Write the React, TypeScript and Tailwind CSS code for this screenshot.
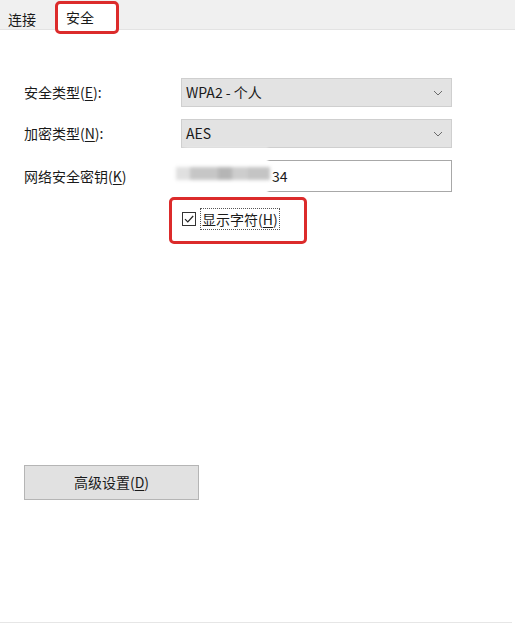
import React from "react";

const font = { fontFamily: '"Noto Sans CJK SC", "Noto Sans", sans-serif' };

function Chevron() {
  return (
    <svg width="10" height="6" viewBox="0 0 10 6" className="shrink-0">
      <path d="M1 1 L5 5 L9 1" fill="none" stroke="#6b6b6b" strokeWidth="1" />
    </svg>
  );
}

function Select({ value }: { value: string }) {
  return (
    <div className="flex h-[29px] w-[271px] items-center justify-between border border-[#cfcfcf] bg-[#e3e3e3] pl-[4px] pr-[8px] text-[14px] text-[#1a1a1a]">
      <span>{value}</span>
      <Chevron />
    </div>
  );
}

export default function App() {
  return (
    <div className="relative h-[624px] w-[515px] overflow-hidden bg-white text-[#1a1a1a]" style={font}>
      {/* Tab bar */}
      <div className="flex h-[30px] items-start border-b border-[#e3e3e3] bg-[#f0f0f0]">
        <div className="h-[29px] w-[57px] pl-[8px] pt-[9px] text-[14px] leading-[20px]">连接</div>
        <div className="relative mt-[2px] h-[28px] w-[60px] bg-white pl-[9px] pt-[5px] text-[14px] leading-[20px]">
          安全
        </div>
      </div>
      {/* tab annotation */}
      <div className="absolute left-[55px] top-[1px] h-[33px] w-[64px] rounded-[5px] border-[3px] border-[#dc2b2b]" />

      {/* Form */}
      <div className="pl-[24px] pt-[48px]">
        <div className="grid grid-cols-[157px_271px] items-center gap-y-[12px] text-[14px]">
          <div>
            安全类型(<span className="underline underline-offset-2">E</span>):
          </div>
          <Select value="WPA2 - 个人" />
          <div>
            加密类型(<span className="underline underline-offset-2">N</span>):
          </div>
          <Select value="AES" />
          <div>
            网络安全密钥(<span className="underline underline-offset-2">K</span>)
          </div>
          <div className="flex h-[32px] items-center border border-[#a8a8a8] bg-white pl-[90px] text-[14px]">
            34
          </div>
        </div>

        <div className="ml-[158px] mt-[16px] flex items-center">
          <div className="flex h-[14px] w-[14px] items-center justify-center border border-[#333]">
            <svg width="12" height="12" viewBox="0 0 12 12">
              <path d="M2 6.2 L4.8 9 L10.2 3" fill="none" stroke="#222" strokeWidth="1.2" />
            </svg>
          </div>
          <div className="ml-[4px] border border-dotted border-[#555] px-[1px] leading-[20px] text-[14px]">
            显示字符(<span className="underline underline-offset-2">H</span>)
          </div>
        </div>

        <div className="mt-[235px] flex h-[35px] w-[175px] items-center justify-center border border-[#b5b5b5] bg-[#e1e1e1] text-[14px]">
          高级设置(<span className="underline underline-offset-2">D</span>)
        </div>
      </div>

      {/* checkbox annotation */}
      <div className="absolute left-[169px] top-[197px] h-[47px] w-[138px] rounded-[5px] border-[3px] border-[#dc2b2b]" />

      {/* blurred key overlay */}
      <div className="absolute left-[168px] top-[148px] h-[46px] w-[100px] rounded-tl-[20px] bg-white blur-[1px]">
        <div className="absolute left-[8px] top-[19px] flex h-[13px] blur-[1.5px]">
          <div className="w-[14px] bg-[#e0e0e0]" />
          <div className="w-[28px] bg-[#c6c6c6]" />
          <div className="w-[14px] bg-[#b5b5b5]" />
          <div className="w-[16px] bg-[#cdcdcd]" />
          <div className="w-[22px] bg-[#c4c4c4]" />
        </div>
      </div>

      {/* bottom line */}
      <div className="absolute bottom-[1px] left-0 h-px w-[512px] bg-[#e6e6e6]" />
    </div>
  );
}
